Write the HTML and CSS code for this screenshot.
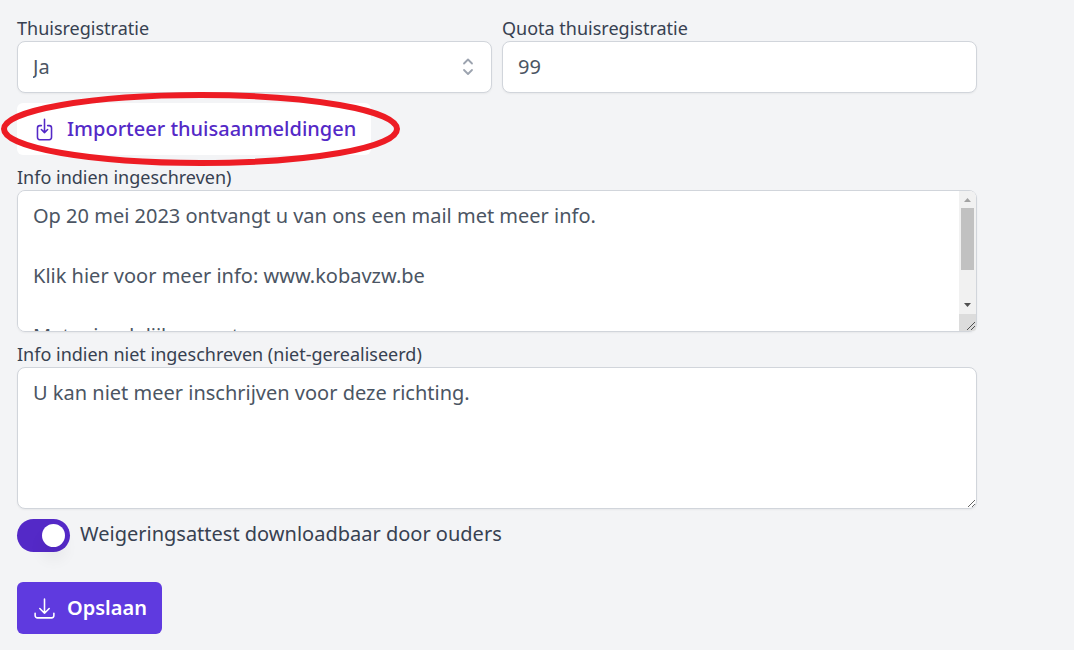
FILE: index.html
```html
<!DOCTYPE html>
<html lang="nl">
<head>
<meta charset="utf-8">
<meta name="viewport" content="width=device-width, initial-scale=1">
<title>Thuisregistratie</title>
<link rel="stylesheet" href="styles.css">
</head>
<body>
<form class="form">
  <div class="row">
    <div class="field">
      <label class="label" for="home">Thuisregistratie</label>
      <div class="select-wrap">
        <select class="control select" id="home"><option selected>Ja</option><option>Nee</option></select>
        <svg class="chevrons" viewBox="0 0 20 20" aria-hidden="true"><path d="M6 6.5l4-4 4 4M6 13l4 4 4-4"/></svg>
      </div>
    </div>
    <div class="field">
      <label class="label" for="quota">Quota thuisregistratie</label>
      <input class="control" id="quota" type="text" value="99">
    </div>
  </div>
  <div class="import">
    <button class="button button-light" type="button">
      <svg class="icon" viewBox="0 0 24 24" aria-hidden="true"><path d="M9 8.25H7.5a2.25 2.25 0 0 0-2.25 2.25v9a2.25 2.25 0 0 0 2.25 2.25h9a2.25 2.25 0 0 0 2.25-2.25v-9a2.25 2.25 0 0 0-2.25-2.25H15M9 12l3 3m0 0l3-3m-3 3V2.25"/></svg>
      Importeer thuisaanmeldingen
    </button>
    <svg class="highlight" viewBox="0 0 401 76" aria-hidden="true"><ellipse cx="200.5" cy="38" rx="196.5" ry="34"/></svg>
  </div>
  <div class="field">
    <label class="label" for="info-in">Info indien ingeschreven)</label>
    <div class="area-wrap">
      <textarea class="control area area-scroll" id="info-in" rows="4">Op 20 mei 2023 ontvangt u van ons een mail met meer info.

Klik hier voor meer info: www.kobavzw.be

Met vriendelijke groeten
</textarea>
      <div class="scrollbar" aria-hidden="true">
        <svg class="arrow arrow-up" viewBox="0 0 17 17"><path d="M5 11L8.5 7L12 11z"/></svg>
        <div class="track"><div class="thumb"></div></div>
        <svg class="arrow" viewBox="0 0 17 17"><path d="M5 6L8.5 10L12 6z"/></svg>
        <svg class="grip" viewBox="0 0 17 17"><path d="M8 16L16 8M12 16L16 12"/></svg>
      </div>
    </div>
  </div>
  <div class="field">
    <label class="label" for="info-out">Info indien niet ingeschreven (niet-gerealiseerd)</label>
    <textarea class="control area" id="info-out" rows="4">U kan niet meer inschrijven voor deze richting.</textarea>
  </div>
  <div class="toggle-row">
    <input class="toggle" type="checkbox" role="switch" id="refusal" checked>
    <label for="refusal">Weigeringsattest downloadbaar door ouders</label>
  </div>
  <button class="button button-primary" type="submit">
    <svg class="icon" viewBox="0 0 24 24" aria-hidden="true"><path d="M3 16.5v2.25A2.25 2.25 0 0 0 5.25 21h13.5A2.25 2.25 0 0 0 21 18.75V16.5M16.5 12L12 16.5m0 0L7.5 12m4.5 4.5V3"/></svg>
    Opslaan
  </button>
</form>
</body>
</html>
```
FILE: styles.css
```css
* { box-sizing: border-box; }
body {
  margin: 0;
  padding: 16px 17px;
  background: #f3f4f6;
  color: #374151;
  font: 20px/30px "Noto Sans", sans-serif;
}
.form {
  display: flex;
  flex-direction: column;
  align-items: stretch;
  gap: 10px;
  max-width: 960px;
}
.row {
  display: grid;
  grid-template-columns: 1fr 1fr;
  gap: 10px;
}
.field { display: flex; flex-direction: column; }
.label {
  font-size: 18px;
  line-height: 25px;
}
.control {
  display: block;
  width: 100%;
  margin: 0;
  padding: 10px 15px;
  border: 1px solid #d1d5db;
  border-radius: 8px;
  background: #fff;
  box-shadow: 0 1px 2px rgb(0 0 0 / 5%);
  color: #4b5563;
  font: inherit;
}
.select-wrap { display: grid; align-items: center; }
.select-wrap > * { grid-area: 1 / 1; }
.select { appearance: none; }
.chevrons {
  justify-self: end;
  width: 20px;
  height: 20px;
  margin-right: 14px;
  fill: none;
  stroke: #9ca3af;
  stroke-width: 1.8;
  stroke-linecap: round;
  stroke-linejoin: round;
  pointer-events: none;
}
.area { resize: vertical; }
.area-wrap { position: relative; }
.area-scroll { scrollbar-width: none; }
.scrollbar {
  position: absolute;
  inset: 1px 1px 1px auto;
  display: flex;
  flex-direction: column;
  width: 17px;
  border-radius: 0 6px 3px 0;
  background: #f1f1f1;
  overflow: hidden;
  pointer-events: none;
}
.track { flex: 1; padding: 0 2px; }
.thumb { height: 70%; background: #c1c1c1; }
.arrow, .grip { display: block; width: 17px; height: 17px; }
.arrow { fill: #505050; }
.arrow-up { fill: #a3a3a3; }
.grip { background: #dcdcdc; stroke: #505050; }
.import { position: relative; display: flex; }
.highlight {
  position: absolute;
  top: -12px;
  left: -17px;
  width: 401px;
  height: 76px;
  fill: none;
  stroke: #ed1c24;
  stroke-width: 6;
  pointer-events: none;
}
.button {
  display: inline-flex;
  align-items: center;
  align-self: flex-start;
  gap: 10px;
  padding: 11px 15px;
  border: 0;
  border-radius: 6px;
  font: inherit;
  cursor: pointer;
}
.button-light { background: #fff; color: #5429c7; font-weight: 500; }
.button-primary { margin-top: 20px; background: #5f3adf; color: #fff; font-weight: 600; }
.icon {
  width: 25px;
  height: 25px;
  fill: none;
  stroke: currentColor;
  stroke-width: 1.5;
  stroke-linecap: round;
  stroke-linejoin: round;
}
.toggle-row {
  display: flex;
  align-items: flex-start;
  gap: 10px;
}
.toggle {
  display: flex;
  align-items: center;
  justify-content: flex-end;
  appearance: none;
  width: 53px;
  height: 33px;
  margin: 0;
  padding: 5px;
  border-radius: 17px;
  background: #5429c7;
}
.toggle::before {
  content: "";
  width: 23px;
  height: 23px;
  border-radius: 50%;
  background: #fff;
  box-shadow: 0 12px 16px rgb(0 0 0 / 6%);
}
.toggle:not(:checked) { justify-content: flex-start; background: #d1d5db; }
```
